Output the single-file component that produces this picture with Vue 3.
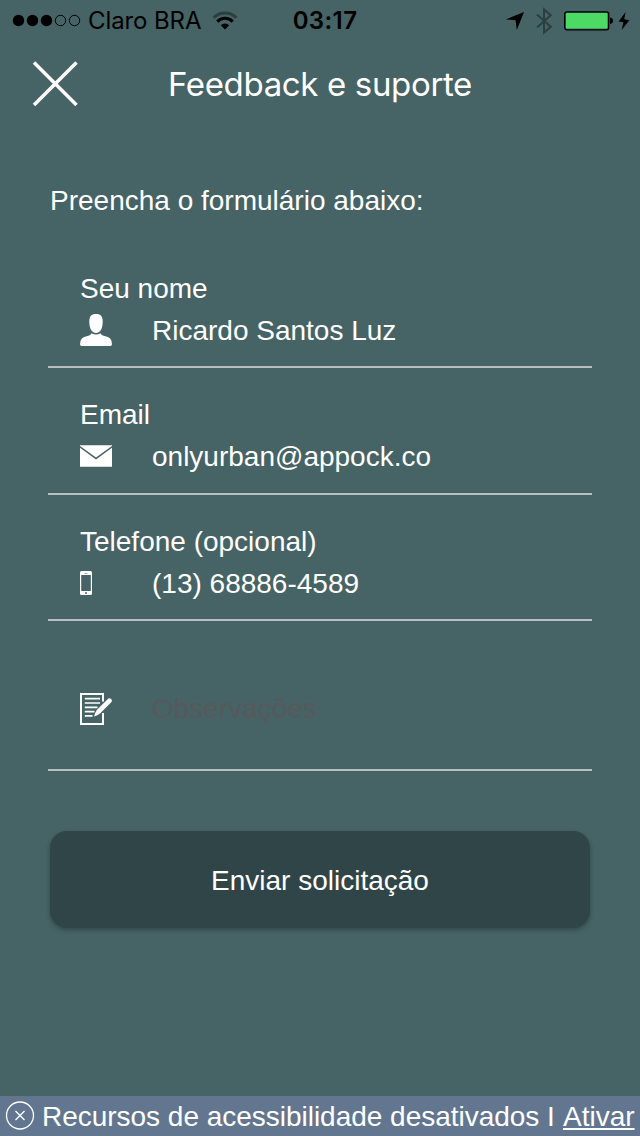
<script setup>
const fields = [
  { id: 'name', label: 'Seu nome', value: 'Ricardo Santos Luz' },
  { id: 'email', label: 'Email', value: 'onlyurban@appock.co' },
  { id: 'phone', label: 'Telefone (opcional)', value: '(13) 68886-4589' },
]
</script>

<template>
  <div class="screen">
    <div class="status">
      <svg class="signal" width="70" height="14" viewBox="0 0 70 14">
        <circle cx="6.5" cy="6.5" r="5.700" />
        <circle cx="20.500" cy="6.5" r="5.700" />
        <circle cx="34.500" cy="6.5" r="5.700" />
        <circle class="ring" cx="48.500" cy="6.5" r="5.200" />
        <circle class="ring" cx="62.500" cy="6.5" r="5.200" />
      </svg>
      <span class="carrier">Claro BRA</span>
      <svg class="wifi" width="26" height="20" viewBox="0 0 26 20">
        <path class="faint" d="M1.600 6.600A16.200 16.200 0 0 1 24.400 6.600" />
        <path d="M5.300 10.600A10.800 10.800 0 0 1 20.700 10.600" />
        <path class="solid" d="M8.800 14.200A6 6 0 0 1 17.200 14.200L13 18.600Z" />
      </svg>
      <span class="clock">03:17</span>
      <div class="indicators">
        <svg width="20" height="20" viewBox="0 0 20 20"><path d="M19 1L11.800 19L10.600 9.300L0.800 8.400Z" /></svg>
        <svg class="bluetooth" width="18" height="28" viewBox="0 0 18 28"><path d="M2 7.500L15.800 19.800L9 25.500V2.500L15.800 8.200L2 20.500" /></svg>
        <svg class="battery" width="50" height="20" viewBox="0 0 50 20">
          <rect class="shell" x="0.700" y="0.800" width="44" height="18" rx="2.200" />
          <rect class="charge" x="2" y="2.100" width="41.400" height="15.400" rx="0.800" />
          <path d="M46 6.500Q49 7 49 9.800T46 13Z" />
        </svg>
        <svg class="bolt" width="12" height="20" viewBox="0 0 12 20"><path d="M7.600 1L0.600 10.400L5.400 11.200L3.600 19L11.400 9.200L6.200 8.200Z" /></svg>
      </div>
    </div>

    <header class="header">
      <svg class="close" width="46" height="46" viewBox="0 0 46 46"><path d="M2 1.500L44.500 44M44.500 1.500L2 44" /></svg>
      <h1 class="title">Feedback e suporte</h1>
    </header>

    <main class="content">
      <p class="intro">Preencha o formulário abaixo:</p>
      <div v-for="f in fields" :key="f.id" class="field" :class="f.id">
        <div class="label">{{ f.label }}</div>
        <div class="row">
          <div class="icon">
            <svg v-if="f.id === 'name'" width="32" height="32" viewBox="0 0 32 32">
              <path d="M16 0C20.800 0 22.700 2.400 22.700 7.500C22.700 14 20.500 18.900 16 18.900S9.300 14 9.300 7.500C9.300 2.400 11.200 0 16 0Z" />
              <path d="M11.400 19.200Q16 21.600 20.600 19.200Q21 21.400 25.500 22.200Q32 23.400 32 30.200Q32 32 30.200 32H1.800Q0 32 0 30.200Q0 23.400 6.500 22.200Q11 21.400 11.400 19.200Z" />
            </svg>
            <svg v-else-if="f.id === 'email'" width="32" height="22" viewBox="0 0 32 22">
              <path d="M0 0.300H32V1L16 12.400L0 1Z" />
              <path d="M0 2.800L16 14.400L32 2.800V21.700H0Z" />
            </svg>
            <svg v-else width="12" height="24" viewBox="0 0 12 24">
              <path fill-rule="evenodd" d="M1.500 0H10.500Q12 0 12 1.500V22.500Q12 24 10.500 24H1.500Q0 24 0 22.500V1.500Q0 0 1.500 0ZM1.200 4V20H10.800V4ZM4.500 2V2.600H7.500V2ZM5 21.200V22.800H7V21.200Z" />
            </svg>
          </div>
          <span class="value">{{ f.value }}</span>
        </div>
      </div>
      <div class="field notes">
        <div class="row">
          <div class="icon">
            <svg class="note-icon" width="32" height="32" viewBox="0 0 32 32">
              <path d="M23 8.500V1H1V31H23V20" />
              <path class="lines" d="M4.800 5.600H20M4.800 10H20M4.800 14.300H17.500M4.800 18.600H14.500M4.800 22.900H12.500" />
              <path class="pen" d="M27.600 6.200Q29.400 4.400 31.200 6.100Q32.700 7.700 31 9.600L20 20.500Q17.500 22.500 14 23.600Q14.800 20.200 16.800 17Z" />
            </svg>
          </div>
          <span class="value placeholder">Observações</span>
        </div>
      </div>
      <button class="submit" type="button">Enviar solicitação</button>
    </main>

    <footer class="banner">
      <svg width="30" height="30" viewBox="0 0 30 30"><circle cx="15" cy="14.500" r="13.500" /><path d="M10.500 10L19.500 19M19.500 10L10.500 19" /></svg>
      <span class="message">Recursos de acessibilidade desativados</span>
      <span class="divider">I</span>
      <a class="activate">Ativar</a>
    </footer>
  </div>
</template>

<style>
body { margin: 0; background: #466365; }
</style>

<style scoped>
.screen {
  width: 640px;
  height: 1136px;
  display: flex;
  flex-direction: column;
  overflow: hidden;
  background: #466365;
  color: #fff;
  font: 28px/42px "Liberation Sans", Arial, sans-serif;
  white-space: nowrap;
}
svg { display: block; flex: none; fill: currentColor; }
.status {
  position: relative;
  height: 42px;
  display: flex;
  align-items: center;
  padding-left: 12px;
  box-sizing: border-box;
  color: #000;
  font: 24px/42px Inter, sans-serif;
}
.ring { fill: none; stroke: #000; stroke-width: 1; }
.carrier { width: 118px; margin-left: 6px; letter-spacing: -0.1px; }
.wifi { margin-left: 6px; }
.wifi path { fill: none; stroke: #000; stroke-width: 3; }
.wifi .faint { stroke: #2b3f40; }
.wifi .solid { fill: #000; stroke: none; }
.clock {
  position: absolute;
  left: 0;
  right: 0;
  padding-left: 10px;
  text-align: center;
  font-weight: 600;
  letter-spacing: 0.4px;
}
.indicators { display: flex; align-items: center; margin-left: auto; padding-right: 10px; }
.bluetooth { margin-left: 10px; }
.bluetooth path { fill: none; stroke: #2b3f40; stroke-width: 2; }
.battery { margin-left: 11px; }
.shell { fill: none; stroke: #000; stroke-width: 1.300; }
.charge { fill: #4cd964; }
.bolt { margin-left: 4px; }
.header { position: relative; height: 86px; }
.close { margin: 19px 0 0 32px; }
.close path { stroke: #fff; stroke-width: 3.500; }
.title {
  position: absolute;
  inset: 22px 0 auto;
  margin: 0;
  text-align: center;
  font: 400 33px/40px Inter, sans-serif;
  letter-spacing: -0.35px;
}
.content { padding: 53px 48px 0; }
.intro { margin: 0 0 21px 2px; line-height: 40px; }
.field {
  height: 126px;
  box-sizing: border-box;
  padding: 26px 0 0 32px;
  border-bottom: 2px solid #b9bfc0;
}
.email { height: 127px; }
.row { display: flex; align-items: center; height: 42px; }
.icon { width: 72px; }
.name .icon, .email .icon, .phone .icon { margin-top: -2px; }
.notes { height: 150px; padding-top: 67px; }
.placeholder { color: #57595c; }
.note-icon path { fill: none; stroke: #fff; stroke-width: 2; }
.note-icon .lines { stroke-width: 1.700; }
.note-icon .pen { fill: #fff; stroke: none; }
.submit {
  display: block;
  width: 540px;
  height: 97px;
  margin: 60px 0 0 2px;
  padding: 2px 0 0;
  border: 0;
  border-radius: 17px;
  background: #304548;
  box-shadow: 0 2px 4px rgba(30, 50, 52, 0.5);
  color: #fff;
  font: inherit;
}
.banner {
  height: 40px;
  margin-top: auto;
  display: flex;
  align-items: center;
  padding-left: 5px;
  background: #62778f;
  line-height: 40px;
}
.banner svg { fill: none; stroke: #fff; stroke-width: 1.300; }
.banner span, .banner a { padding-top: 2px; }
.message { width: 498px; margin-left: 7px; letter-spacing: -0.02px; }
.divider { width: 8px; margin-left: 7px; }
.activate {
  margin-left: 8px;
  text-decoration: underline;
  text-decoration-thickness: 2px;
  text-underline-offset: 2px;
}
</style>
